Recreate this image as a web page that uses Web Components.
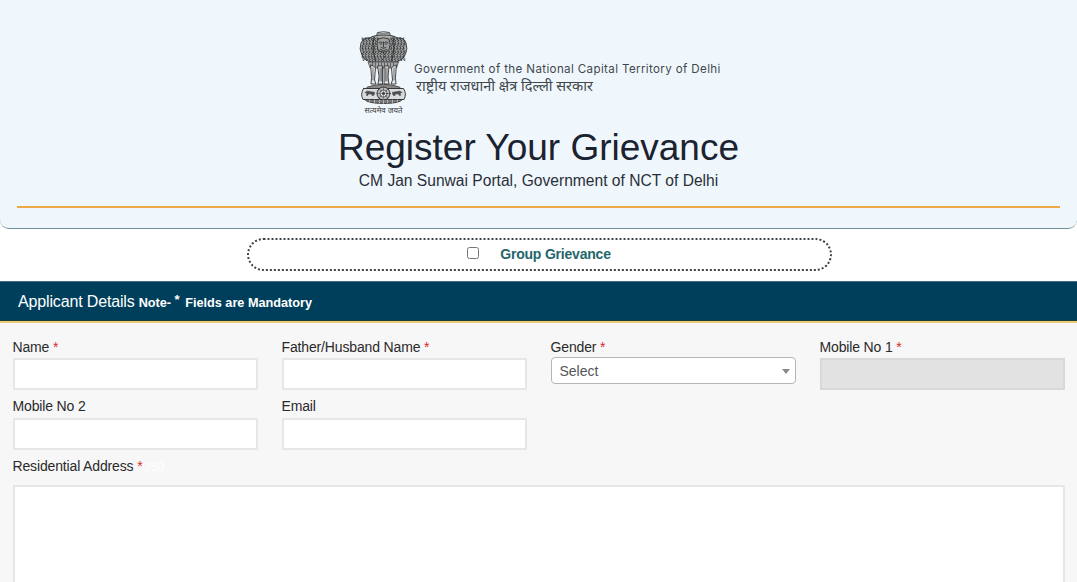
<!DOCTYPE html>
<html lang="en"><head><meta charset="utf-8"><title>Register Your Grievance</title>
<style>html,body{margin:0;padding:0;background:#fff;overflow:hidden;height:582px}body{font-family:"Liberation Sans",Arial,sans-serif}</style>
</head><body>
<grv-page></grv-page>
<template id="emblem-t"><style>:host{display:flex;flex-direction:column;align-items:center;width:49px}svg{display:block;width:49px;height:76px;filter:blur(.25px)}.m{font:7.800px/9px "Noto Sans","Liberation Sans",sans-serif;color:#3a3a3a;white-space:nowrap;height:9px}</style>
<svg viewBox="0 0 48 76" fill="none" stroke="#333" stroke-linecap="round" stroke-linejoin="round">
<path d="M17 6 L18 2.500 Q24 1 30 2.500 L31 6Z" fill="#e4e7e9" stroke-width=".9"/>
<path d="M19 3.500h10M18.500 5h11" stroke-width=".5"/>
<path d="M10 8 Q4 7 1.500 13 Q-.5 19 2 24 Q5 31 12 32 L36 32 Q43 31 46 24 Q48.500 19 46.500 13 Q44 7 38 8 Q34 5 24 5 Q14 5 10 8Z" fill="#a9acad" stroke-width=".9"/>
<path d="M14.500 7 Q12 18 16 31M33.500 7 Q36 18 32 31" stroke-width="1"/>
<g id="curls" stroke-width=".8" stroke="#222"></g>
<path d="M18.500 9 Q24 6.500 29.500 9 Q31.500 14 29.500 20 Q24 24 18.500 20 Q16.500 14 18.500 9Z" fill="#9da0a1" stroke-width=".9"/>
<path d="M19.500 12.500q2-1.500 3.500 0M25 12.500q1.500-1.500 3.500 0M20.500 14h1.800M25.700 14h1.800" stroke-width=".9"/>
<path d="M24 12v5M21.500 17.500q2.500 2 5 0M20.500 19.500q3.500 2.500 7 0" stroke-width=".9"/>
<path d="M9 32 H39 L37 38 H11Z" fill="#a4a7a8" stroke-width=".7"/>
<path d="M13 32v4M16 33v4M19 33v4M22 33v4M25 33v4M28 33v4M31 33v4M34 33v4" stroke-width=".6"/>
<g fill="#e6e9eb" stroke-width=".9"><path d="M11.500 35 Q14.500 36 16 38 L15 50 L16.500 54 H11.500 L12 48Z"/><path d="M18.500 36 H23 V54 H18.500 L19.500 47Z"/><path d="M25 36 H29.500 L28.500 47 L29.500 54 H25Z"/><path d="M36.500 35 Q33.500 36 32 38 L33 50 L31.500 54 H36.500 L36 48Z"/></g>
<path d="M13.500 38v12M20.500 38v13M27.500 38v13M34.500 38v12M21.800 38v13M26.200 38v13" stroke-width=".8" stroke="#4a4a4a"/>
<path d="M8 57 Q24 51.500 40 57 L41 58.500 H7Z" fill="#888" stroke-width=".8"/>
<path d="M4 58.500 H44 Q47.500 64 44.500 69.500 H3.500 Q.5 64 4 58.500Z" fill="#d9dcde" stroke-width=".95"/>
<circle cx="24" cy="63.500" r="6.500" fill="#b9bcbe" stroke-width=".95"/><circle cx="24" cy="63.500" r="3.600" fill="#e8eaec" stroke-width=".7"/><circle cx="24" cy="63.500" r="1.300" fill="#333" stroke="none"/>
<path d="M24 57v13M17.500 63.500h13M19.400 58.900l9.200 9.200M28.600 58.900l-9.200 9.200" stroke-width=".45"/>
<path d="M5.500 62.500q2.500-2.500 4.500-1l5 .7q.5 2-1 3.300h-1.500l-.3-1.500h-3.500l-.5 1.500h-1.300l.4-2.500zM42.500 62.500q-2.500-2.500-4.500-1l-5 .7q-.5 2 1 3.300h1.500l.3-1.500h3.500l.5 1.500h1.300l-.4-2.500z" fill="#555" stroke-width=".45"/>
<path d="M5 69.500 H43 Q40 73.500 24 73.500 Q8 73.500 5 69.500Z" fill="#777" stroke-width=".85"/>
<path d="M10 70v2M15 70v3M20 70v3M24 70v3.500M28 70v3M33 70v3M38 70v2" stroke="#e4e6e8" stroke-width=".55"/>
</svg><div class="m">सत्यमेव जयते</div></template>

<template id="head-t"><style>
:host{display:block;height:229px;box-sizing:border-box;background:#eff7fd;border-bottom:1.5px solid #6f9097;border-radius:0 0 9px 9px;padding:30px 17px 0 17px}
.logo{display:flex;align-items:flex-start;margin-left:342px;height:85px}
.gov{margin:32px 0 0 6px;color:#42474c}
.en{font:400 11.600px/15px Inter,"Open Sans",sans-serif;letter-spacing:.36px;white-space:nowrap}
.hi{font:14.500px/20px "Noto Sans",sans-serif;white-space:nowrap;margin:-2px 0 0 2px}
h1{margin:11px 0 0;font:400 37px/44px "Liberation Sans",Arial,sans-serif;color:#1b2330;text-align:center;white-space:nowrap}
p{margin:1px 0 0;font:400 15.600px/20px "Liberation Sans",Arial,sans-serif;color:#2a2f36;text-align:center}
hr{margin:15px 0 0;border:0;height:2px;background:#eda848}
</style><div class="logo"><gov-emblem></gov-emblem><div class="gov"><div class="en">Government of the National Capital Territory of Delhi</div><div class="hi">राष्ट्रीय राजधानी क्षेत्र दिल्ली सरकार</div></div></div>
<h1>Register Your Grievance</h1><p>CM Jan Sunwai Portal, Government of NCT of Delhi</p><hr></template>

<template id="group-t"><style>
:host{display:flex;align-items:center;justify-content:center;box-sizing:border-box;width:585px;height:33px;margin:9px 0 0 247px;border:2px dotted #3c4248;border-radius:17px;background:#fff}
.w{display:flex;align-items:center;margin-left:-1px}
.b{width:12px;height:12px;box-sizing:border-box;border:1px solid #767676;border-radius:2.500px;background:#fff;margin-top:-4px}
label{margin:-1px 0 0 21px;font:700 14px/20px "Liberation Sans",Arial,sans-serif;letter-spacing:-.2px;color:#1f676c;white-space:nowrap}
</style><div class="w"><span class="b" role="checkbox"></span><label><slot></slot></label></div></template>

<template id="bar-t"><style>
:host{display:flex;align-items:baseline;box-sizing:border-box;height:42px;margin-top:10px;padding:10px 18px 0;background:#003f5c;border-top:1px solid #3f7284;border-bottom:2px solid #e8cd7a;box-shadow:inset 0 -1px 0 #1c3c35;color:#fff;white-space:nowrap}
.t{font:400 16px/20px "Liberation Sans",Arial,sans-serif;letter-spacing:-.15px}
.n{font:700 12.700px/20px "Liberation Sans",Arial,sans-serif;margin-left:4px}
sup{font-size:13px;line-height:0;vertical-align:3px;margin:0 2px 0 0}
</style><span class="t">Applicant Details</span><span class="n">Note- <sup>*</sup> Fields are Mandatory</span></template>

<template id="field-t"><style>
:host{display:block;min-width:0}
.l{display:block;font:400 14px/17px "Liberation Sans",Arial,sans-serif;letter-spacing:-.15px;color:#2a2a2a;white-space:nowrap;height:17px}
.s{color:#d92a2a}
.c{color:#fff;margin-left:2px;font-size:12px;opacity:.85}
.i{display:block;box-sizing:border-box;width:100%;height:var(--h,32px);margin-top:var(--ig,2px);border:2px solid #e6e6e6;background:#fff}
:host([disabled]) .i{background:#e2e2e2;border-color:#d8d8d8}
:host([kind=select]) .i{height:27px;margin-top:1px;border:1px solid #b5b5b5;border-radius:4px;position:relative;font:14px/27px "Liberation Sans",Arial,sans-serif;color:#555;padding-left:8px}
:host([kind=select]) .i::after{content:"";position:absolute;right:5px;top:11px;border:4.500px solid transparent;border-top:5px solid #888;border-bottom:0}
:host([kind=area]) .i{height:110px}
</style><span class="l"><slot name="label"></slot><span class="s"></span><span class="c"></span></span><div class="i"></div></template>

<template id="form-t"><style>
:host{display:grid;grid-template-columns:repeat(4,1fr);column-gap:23.500px;padding:16px 12px 0 12.500px;background:#f7f7f7;height:260px;box-sizing:border-box;align-content:start}
</style><slot></slot></template>

<template id="page-t"><style>:host{display:block;width:1077px;height:582px;overflow:hidden}</style>
<grv-head></grv-head><grv-group>Group Grievance</grv-group><grv-bar></grv-bar>
<grv-form>
<grv-field label="Name" req></grv-field><grv-field label="Father/Husband Name" req></grv-field><grv-field label="Gender" req kind="select" value="Select"></grv-field><grv-field label="Mobile No 1" req disabled></grv-field>
<grv-field label="Mobile No 2" style="margin-top:8px;--ig:3px"></grv-field><grv-field label="Email" style="margin-top:8px;--ig:3px"></grv-field><div></div><div></div>
<grv-field label="Residential Address" req count="250" kind="area" style="grid-column:1/-1;margin-top:8px;--ig:10px"></grv-field>
</grv-form></template>

<script>
function def(name,tpl,init){customElements.define(name,class extends HTMLElement{constructor(){super();this.attachShadow({mode:"open"}).appendChild(document.getElementById(tpl).content.cloneNode(true));}connectedCallback(){if(init)init(this)}})}
def("gov-emblem","emblem-t",el=>{const g=el.shadowRoot.getElementById("curls");if(g.firstChild)return;let d="";
for(let y=8;y<31;y+=2.6){for(let x=2.5+(Math.round(y)%2);x<46;x+=3){const cx=x-24;if(Math.abs(cx)<6&&y<21)continue;if(Math.abs(cx)>21.5&&(y<11||y>26))continue;const s=x<24?1:-1;d+=`M${x} ${y}q${1.6*s} -.6 ${1.4*s} 1 q${-.3*s} 1.100 ${-1.300*s} .6 `}}
const p=document.createElementNS("http://www.w3.org/2000/svg","path");p.setAttribute("d",d);g.appendChild(p)});
def("grv-head","head-t");def("grv-group","group-t");def("grv-bar","bar-t");def("grv-form","form-t");
def("grv-field","field-t",el=>{const r=el.shadowRoot;const l=r.querySelector(".l");const sl=l.querySelector("slot");if(sl)sl.replaceWith(document.createTextNode(el.getAttribute("label")+" "));if(el.hasAttribute("req"))r.querySelector(".s").textContent="*";if(el.getAttribute("count"))r.querySelector(".c").textContent=el.getAttribute("count");if(el.getAttribute("value"))r.querySelector(".i").textContent=el.getAttribute("value")});
def("grv-page","page-t");
</script>
</body></html>
